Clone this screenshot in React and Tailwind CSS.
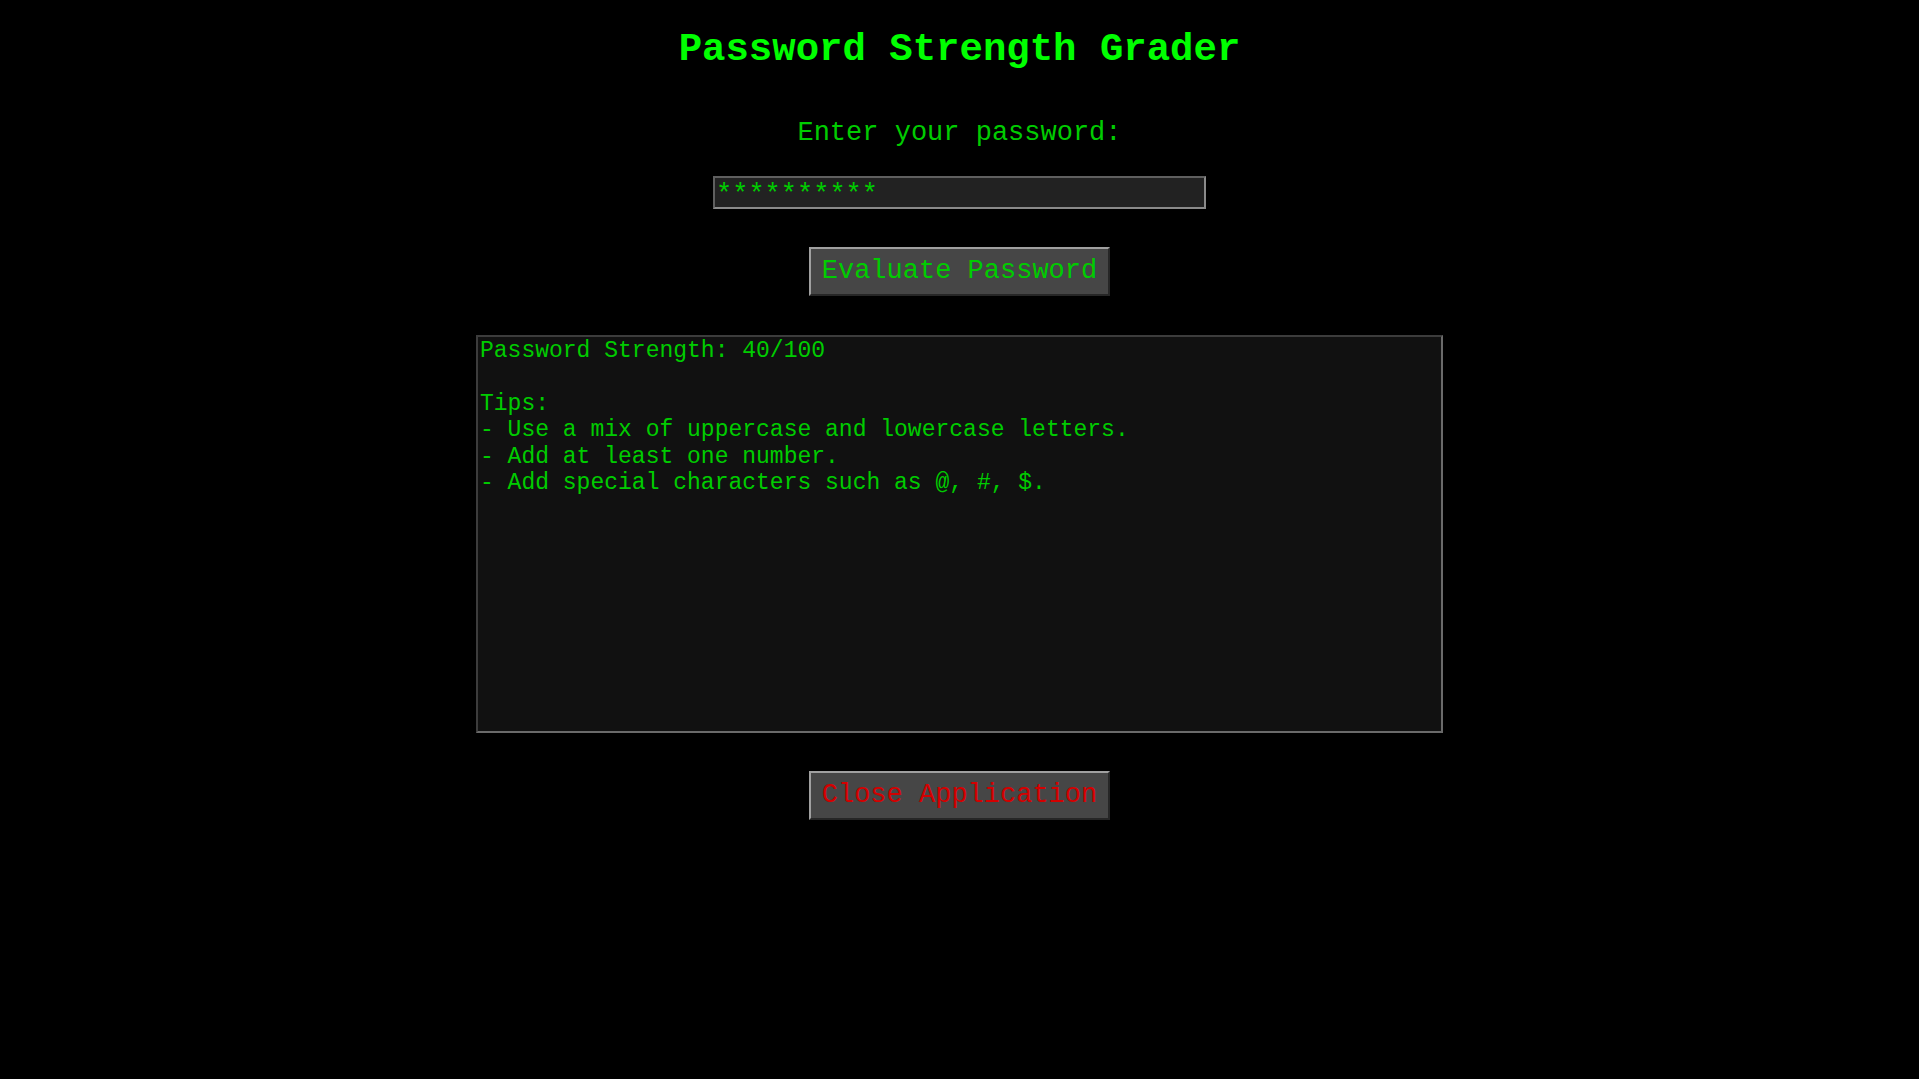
import React, { useState } from "react";

const mono = { fontFamily: '"Liberation Mono", "Courier New", monospace' };

const tips = [
  "- Use a mix of uppercase and lowercase letters.",
  "- Add at least one number.",
  "- Add special characters such as @, #, $.",
];

export default function App() {
  const [password, setPassword] = useState("**********");

  return (
    <div
      className="min-h-screen w-full bg-black flex flex-col items-center"
      style={mono}
    >
      <h1 className="mt-[29px] text-[39px] leading-[43px] font-bold text-[#00ff00]">
        Password Strength Grader
      </h1>

      <p className="mt-[46px] text-[27px] leading-[31px] text-[#00cc00]">
        Enter your password:
      </p>

      <input
        type="text"
        value={password}
        onChange={(e) => setPassword(e.target.value)}
        className="mt-[27px] w-[493px] h-[33px] bg-[#222222] border-2 border-t-[#5f5f5f] border-l-[#5f5f5f] border-b-[#8a8a8a] border-r-[#8a8a8a] pl-[1px] pr-[3px] pt-[4px] pb-0 text-[27px] leading-[25px] text-[#00cc00] outline-none"
        style={mono}
      />

      <button className="mt-[38px] w-[301px] h-[49px] bg-[#464646] border-2 border-t-[#a0a0a0] border-l-[#a0a0a0] border-b-[#262626] border-r-[#262626] text-[27px] leading-[31px] text-[#00cc00]">
        Evaluate Password
      </button>

      <div className="mt-[39px] w-[967px] h-[398px] bg-[#111111] border-2 border-t-[#3c3c3c] border-l-[#3c3c3c] border-b-[#6a6a6a] border-r-[#6a6a6a] px-[2px] pt-[1px] text-[23px] leading-[26.4px] text-[#00cc00] whitespace-pre">
        <div>Password Strength: 40/100</div>
        <div>&nbsp;</div>
        <div>Tips:</div>
        {tips.map((t) => (
          <div key={t}>{t}</div>
        ))}
      </div>

      <button className="mt-[38px] w-[301px] h-[49px] bg-[#464646] border-2 border-t-[#a0a0a0] border-l-[#a0a0a0] border-b-[#262626] border-r-[#262626] text-[27px] leading-[31px] text-[#d40000]">
        Close Application
      </button>
    </div>
  );
}
